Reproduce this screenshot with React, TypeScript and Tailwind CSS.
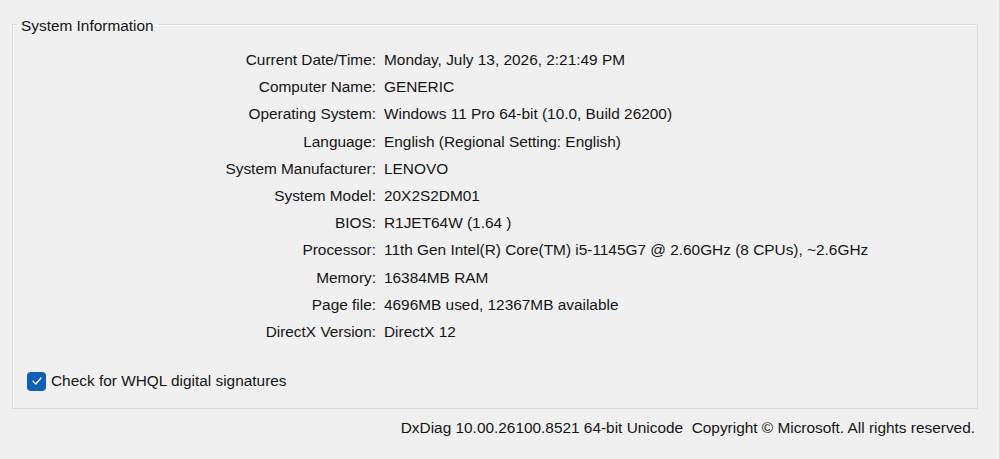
const rows: [string, string][] = [
  ["Current Date/Time:", "Monday, July 13, 2026, 2:21:49 PM"],
  ["Computer Name:", "GENERIC"],
  ["Operating System:", "Windows 11 Pro 64-bit (10.0, Build 26200)"],
  ["Language:", "English (Regional Setting: English)"],
  ["System Manufacturer:", "LENOVO"],
  ["System Model:", "20X2S2DM01"],
  ["BIOS:", "R1JET64W (1.64 )"],
  ["Processor:", "11th Gen Intel(R) Core(TM) i5-1145G7 @ 2.60GHz (8 CPUs), ~2.6GHz"],
  ["Memory:", "16384MB RAM"],
  ["Page file:", "4696MB used, 12367MB available"],
  ["DirectX Version:", "DirectX 12"],
];

const App = () => (
  <div className="w-[1000px] h-[459px] bg-[#f0f0f0] text-[#151515] text-[15.4px] font-['Liberation_Sans',Arial,sans-serif] pt-[13px] pl-[12px] border-r border-[#e2e2e2] overflow-hidden">
    <fieldset className="w-[966px] border border-[#dadada] shadow-[inset_1px_1px_0_#fbfbfb] pb-[17px]">
      <legend className="ml-[4px] px-[4px] leading-[20px] pt-[3px]">System Information</legend>
      <div className="grid grid-cols-[363px_1fr] gap-x-[8px] pt-[10px] leading-[27.2px]">
        {rows.map(([label, value]) => (
          <div key={label} className="contents">
            <div className="text-right">{label}</div>
            <div>{value}</div>
          </div>
        ))}
      </div>
      <label className="flex items-center gap-[5px] mt-[26px] ml-[14px] leading-[20px]">
        <span className="w-[19px] h-[19px] rounded-[4px] bg-[#0f5fb8] flex items-center justify-center">
          <svg width="12" height="12" viewBox="0 0 12 12" fill="none">
            <path d="M2 6.3 L4.8 9 L10 3" stroke="#fff" strokeWidth="1.3" strokeLinecap="round" strokeLinejoin="round" />
          </svg>
        </span>
        <span>Check for WHQL digital signatures</span>
      </label>
    </fieldset>
    <div className="w-[963px] text-right mt-[9px] leading-[20px] whitespace-pre">
      {"DxDiag 10.00.26100.8521 64-bit Unicode  Copyright © Microsoft. All rights reserved."}
    </div>
  </div>
);

export default App;
